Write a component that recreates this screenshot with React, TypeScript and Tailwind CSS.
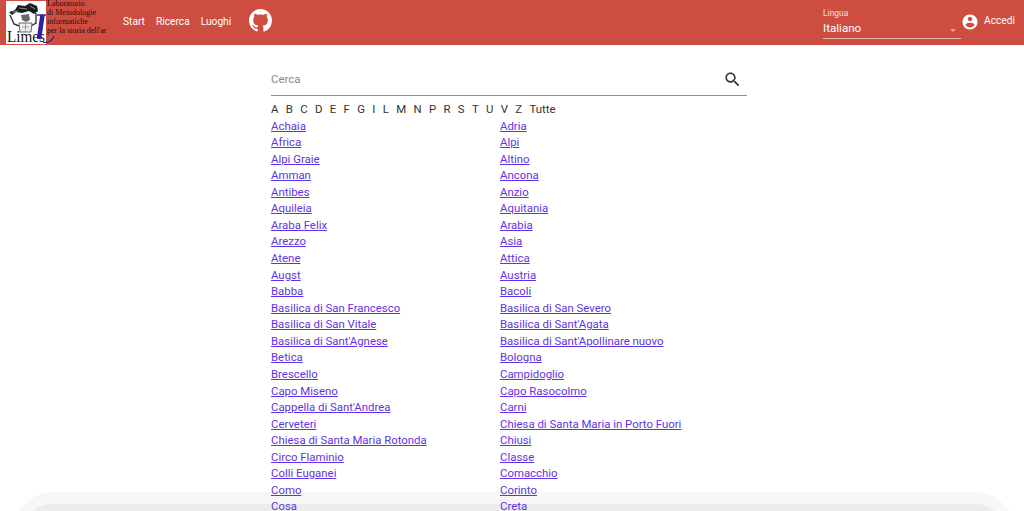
import { FC } from "react";

const letters = ["A", "B", "C", "D", "E", "F", "G", "I", "L", "M", "N", "P", "R", "S", "T", "U", "V", "Z", "Tutte"];

const places = [
    ["Achaia", "Adria"],
    ["Africa", "Alpi"],
    ["Alpi Graie", "Altino"],
    ["Amman", "Ancona"],
    ["Antibes", "Anzio"],
    ["Aquileia", "Aquitania"],
    ["Araba Felix", "Arabia"],
    ["Arezzo", "Asia"],
    ["Atene", "Attica"],
    ["Augst", "Austria"],
    ["Babba", "Bacoli"],
    ["Basilica di San Francesco", "Basilica di San Severo"],
    ["Basilica di San Vitale", "Basilica di Sant'Agata"],
    ["Basilica di Sant'Agnese", "Basilica di Sant'Apollinare nuovo"],
    ["Betica", "Bologna"],
    ["Brescello", "Campidoglio"],
    ["Capo Miseno", "Capo Rasocolmo"],
    ["Cappella di Sant'Andrea", "Carni"],
    ["Cerveteri", "Chiesa di Santa Maria in Porto Fuori"],
    ["Chiesa di Santa Maria Rotonda", "Chiusi"],
    ["Circo Flaminio", "Classe"],
    ["Colli Euganei", "Comacchio"],
    ["Como", "Corinto"],
    ["Cosa", "Creta"],
];

const Logo: FC = () => (
    <div className="flex h-[45px] w-[122px] shrink-0 items-start pl-[6px] pt-px">
        <svg width="40" height="43" viewBox="0 0 40 43" className="shrink-0 overflow-visible">
            <rect width="40" height="43" fill="#fff" />
            {/* figure carrying a load */}
            <path d="M3 11 L9 9 L12 4 L19 5 L24 2 L31 5 L32 10 L28 13 L23 10 L16 12 L10 11 L6 14 Z" fill="#1c1c1c" />
            <path d="M13 7 L21 8 M6 11 L12 10 M24 5 L29 8" stroke="#aaa" strokeWidth="0.8" fill="none" />
            <path d="M4 14 L8 23 L13 25 M30 12 L30 22 L25 25" stroke="#333" strokeWidth="1.4" fill="none" />
            <path d="M15 14 L23 13 L24 19 L20 21 L16 19 Z" fill="#6a6a6a" />
            <path d="M13 22 L26 22 L25 31 L14 31 Z" fill="#efefef" stroke="#444" strokeWidth="0.8" />
            <path d="M19.5 22 V31 M16 26 H23" stroke="#888" strokeWidth="0.7" />
            <text x="1" y="41" fontFamily="'Liberation Serif', serif" fontSize="16" textLength="38" lengthAdjust="spacingAndGlyphs" fill="#111">Limes</text>
            <path d="M31 14 L40 14" stroke="#2f1fa6" strokeWidth="1.5" fill="none" />
            <path d="M36.5 14 L33 38" stroke="#2f1fa6" strokeWidth="4.5" fill="none" />
            <path d="M37 41.5 Q46 42 48 35" stroke="#2f1fa6" strokeWidth="1.1" fill="none" />
        </svg>
        <div className="ml-px text-[8px] leading-[9px] text-[#2e0a0c] [font-family:'Liberation_Serif',serif]">
            <div className="-mt-[2px]">Laboratorio</div>
            <div>di Metodologie</div>
            <div>informatiche</div>
            <div className="whitespace-nowrap">per la storia dell'ar</div>
        </div>
    </div>
);

const App: FC = () => {
    return (
        <div className="relative h-[511px] w-full overflow-hidden bg-white text-[11.4px] [font-family:Roboto,sans-serif]">
            <header className="flex h-[45px] items-center bg-[#cd4d41] text-white">
                <Logo />
                <nav className="ml-px flex items-center gap-[11px] pb-px text-[10.2px]">
                    <a>Start</a>
                    <a>Ricerca</a>
                    <a>Luoghi</a>
                </nav>
                <svg width="23" height="23" viewBox="0 0 16 16" fill="#fff" className="mb-[5px] ml-[18px]">
                    <path d="M8 0C3.58 0 0 3.58 0 8c0 3.54 2.29 6.53 5.47 7.59.4.07.55-.17.55-.38 0-.19-.01-.82-.01-1.49-2.01.37-2.53-.49-2.69-.94-.09-.23-.48-.94-.82-1.13-.28-.15-.68-.52-.01-.53.63-.01 1.08.58 1.23.82.72 1.21 1.87.87 2.33.66.07-.52.28-.87.51-1.07-1.78-.2-3.64-.89-3.64-3.95 0-.87.31-1.59.82-2.15-.08-.2-.36-1.02.08-2.12 0 0 .67-.21 2.2.82.64-.18 1.32-.27 2-.27s1.36.09 2 .27c1.53-1.04 2.2-.82 2.2-.82.44 1.1.16 1.92.08 2.12.51.56.82 1.27.82 2.15 0 3.07-1.87 3.75-3.65 3.95.29.25.54.73.54 1.48 0 1.07-.01 1.93-.01 2.2 0 .21.15.46.55.38A8.01 8.01 0 0 0 16 8c0-4.42-3.58-8-8-8z" />
                </svg>
                <div className="ml-auto flex w-[138px] flex-col self-start pt-[9px]">
                    <span className="text-[8.5px] leading-[9px] text-white/80">Lingua</span>
                    <div className="relative flex h-[21px] items-center border-b border-white/60 pt-px text-[11.6px]">
                        Italiano
                        <span className="absolute right-[5px] top-[11px] h-0 w-0 border-x-[3.5px] border-t-[3.5px] border-x-transparent border-t-white/50" />
                    </div>
                </div>
                <div className="mb-[3px] flex w-[63px] shrink-0 items-center gap-[6px] text-[10.2px]">
                    <svg width="18" height="18" viewBox="0 0 24 24" fill="#fff" className="mt-[2px]">
                        <path d="M12 2C6.48 2 2 6.48 2 12s4.48 10 10 10 10-4.48 10-10S17.52 2 12 2zm0 3c1.66 0 3 1.34 3 3s-1.34 3-3 3-3-1.34-3-3 1.34-3 3-3zm0 14.2c-2.5 0-4.71-1.28-6-3.22.03-1.99 4-3.08 6-3.08 1.99 0 5.97 1.09 6 3.08-1.29 1.94-3.5 3.22-6 3.22z" />
                    </svg>
                    <span className="-ml-px">Accedi</span>
                </div>
            </header>
            <div className="absolute left-[11px] top-[492px] h-[70px] w-[1006px] rounded-t-[44px] bg-[#f7f7f7] pl-[11px] pr-[12px] pt-[12px]">
                <div className="h-full rounded-t-[30px] bg-[#ececec]" />
            </div>
            <main className="relative ml-[271px] w-[476px] pt-[14px]">
                <div className="flex h-[37px] items-center justify-between border-b border-[#8f8f8f] pt-[5px]">
                    <span className="text-[#8a8a8a]">Cerca</span>
                    <svg width="19" height="19" viewBox="0 0 24 24" fill="#333" className="mr-[5px] mt-[-1px]">
                        <path d="M15.5 14h-.79l-.28-.27C15.41 12.59 16 11.11 16 9.5 16 5.91 13.09 3 9.5 3S3 5.91 3 9.5 5.91 16 9.5 16c1.61 0 3.09-.59 4.23-1.57l.27.28v.79l5 4.99L20.49 19l-4.99-5zm-6 0C7.01 14 5 11.99 5 9.5S7.01 5 9.5 5 14 7.01 14 9.5 11.99 14 9.5 14z" />
                    </svg>
                </div>
                <div className="mt-[5px] flex h-[16px] items-center gap-[7.33px] leading-[16px] text-[#333]">
                    {letters.map((l) => (
                        <span key={l}>{l}</span>
                    ))}
                </div>
                <div className="mt-[0.5px] grid grid-cols-[229px_1fr] leading-[16.56px] text-[#5f33e6]">
                    {places.flat().map((name) => (
                        <a key={name} className="underline">
                            {name}
                        </a>
                    ))}
                </div>
            </main>
        </div>
    );
};

export default App;
